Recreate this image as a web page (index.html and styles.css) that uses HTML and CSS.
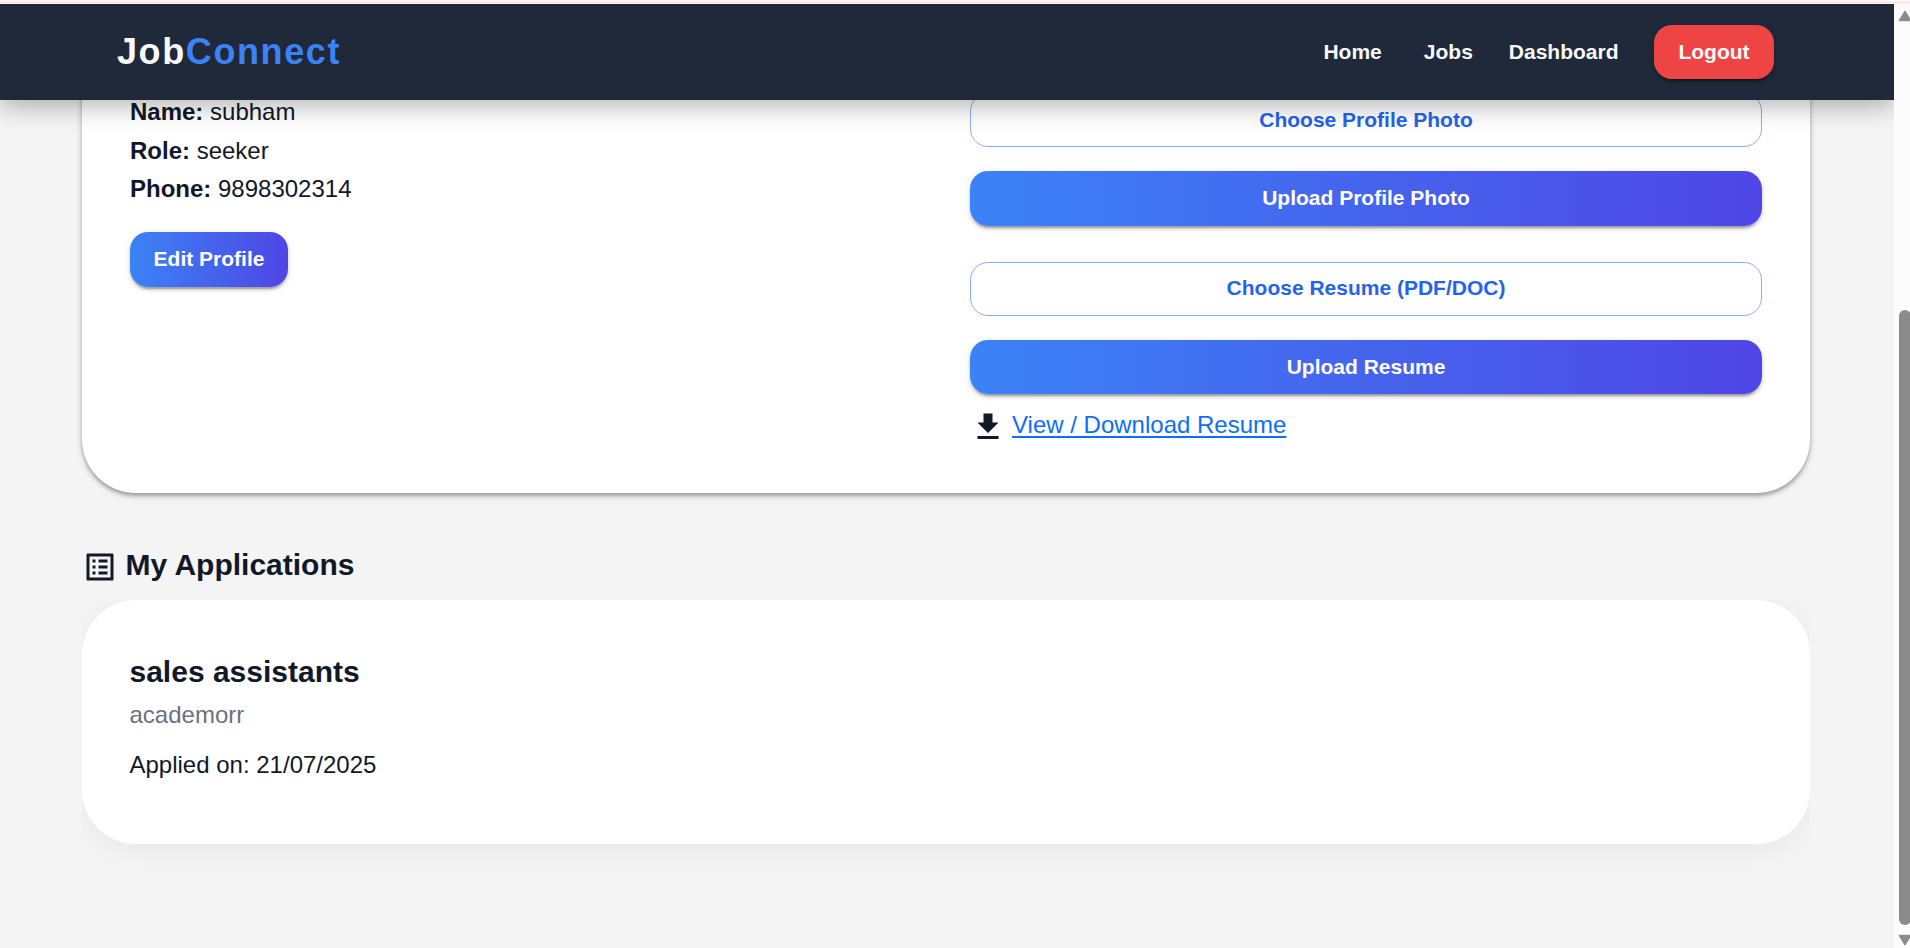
FILE: index.html
```html
<!DOCTYPE html>
<html lang="en">
<head>
<meta charset="utf-8">
<title>JobConnect</title>
<link rel="stylesheet" href="styles.css">
</head>
<body>
<div class="top-edge"></div>
<div class="window">
  <div class="page">
    <header class="navbar">
      <div class="logo">Job<span class="logo-accent">Connect</span></div>
      <nav class="nav-links">
        <a class="nav-link nav-home">Home</a>
        <a class="nav-link">Jobs</a>
        <a class="nav-link">Dashboard</a>
        <button class="btn btn-logout">Logout</button>
      </nav>
    </header>
    <main class="content">
      <section class="card profile">
        <div class="details">
          <p class="detail"><strong>Name:</strong> subham</p>
          <p class="detail"><strong>Role:</strong> seeker</p>
          <p class="detail"><strong>Phone:</strong> 9898302314</p>
          <button class="btn btn-primary btn-edit">Edit Profile</button>
        </div>
        <div class="uploads">
          <div class="upload-group">
            <button class="btn btn-outline">Choose Profile Photo</button>
            <button class="btn btn-primary btn-photo">Upload Profile Photo</button>
          </div>
          <div class="upload-group">
            <button class="btn btn-outline btn-resume">Choose Resume (PDF/DOC)</button>
            <button class="btn btn-primary">Upload Resume</button>
          </div>
          <div class="resume-row">
            <svg class="icon" viewBox="0 0 24 24"><path d="M19 9h-4V3H9v6H5l7 7 7-7zM5 18v2h14v-2H5z"/></svg>
            <a class="resume-link">View / Download Resume</a>
          </div>
        </div>
      </section>
      <h2 class="section-title">
        <svg class="icon" viewBox="0 0 24 24"><path d="M19 5v14H5V5h14m1.1-2H3.9c-.5 0-.9.4-.9.9v16.200c0 .4.4.9.9.9h16.200c.4 0 .9-.5.9-.9V3.900c0-.5-.5-.9-.9-.9zM11 7h6v2h-6V7zm0 4h6v2h-6v-2zm0 4h6v2h-6zM7 7h2v2H7zm0 4h2v2H7zm0 4h2v2H7z"/></svg>
        <span>My Applications</span>
      </h2>
      <div class="applications">
        <article class="card application">
          <h3 class="job-title">sales assistants</h3>
          <p class="company">academorr</p>
          <p class="applied">Applied on: 21/07/2025</p>
        </article>
      </div>
    </main>
  </div>
  <div class="scrollbar">
    <svg class="arrow" viewBox="0 0 14 12"><path d="M7 1.500L12.500 10.500H1.500Z"/></svg>
    <div class="thumb"></div>
    <svg class="arrow" viewBox="0 0 14 12"><path d="M7 10.500L12.500 1.500H1.500Z"/></svg>
  </div>
</div>
</body>
</html>
```
FILE: styles.css
```css
* { box-sizing: border-box; }

body {
  margin: 0;
  width: 1910px;
  height: 948px;
  overflow: hidden;
  background: #f4f4f4;
  color: #111827;
  font: 24px/38.4px "Liberation Sans", Arial, sans-serif;
}

h2, h3, p { margin: 0; }

.top-edge {
  height: 4px;
  background: linear-gradient(#fff6f5 0 2px, #fadcdb 2px 3px, #fff8f8 3px 4px);
}

.window { display: flex; height: 944px; }
.page { width: 1894px; overflow: hidden; }

.navbar {
  position: relative;
  z-index: 2;
  display: flex;
  align-items: center;
  justify-content: space-between;
  height: 96px;
  padding: 0 120px 0 117px;
  background: #1f293a;
  box-shadow: 0 6px 24px rgba(0, 0, 0, .3);
}

.logo {
  color: #f9fafb;
  font-size: 36px;
  font-weight: 700;
  letter-spacing: 1.6px;
}
.logo-accent { color: #3b82f6; }

.nav-links { display: flex; align-items: center; gap: 36px; }
.nav-link { color: #f9fafb; font-size: 21px; font-weight: 700; }
.nav-home { margin-right: 6px; }

.btn {
  display: block;
  width: 100%;
  height: 54px;
  padding: 0;
  border: 0;
  border-radius: 18px;
  color: #fff;
  font: 700 21px/36px "Liberation Sans", Arial, sans-serif;
  text-align: center;
  box-shadow: 0 4.5px 1.5px -3px rgba(0, 0, 0, .2), 0 3px 3px rgba(0, 0, 0, .14), 0 1.5px 7.5px rgba(0, 0, 0, .12);
}
.btn-logout { width: 120px; margin-left: -.5px; background: #ef4444; color: #f9fafb; }
.btn-primary { background: linear-gradient(90deg, #3b82f6, #4f46e5); }
.btn-edit { width: 158px; height: 55px; margin-top: 23.500px; padding-bottom: 1px; }
.btn-photo { height: 55px; padding-bottom: 2px; }
.btn-outline {
  border: 1px solid #8aaef5;
  background: #fff;
  color: #2563eb;
  box-shadow: none;
}
.btn-resume { padding-bottom: 2px; }

.content { padding: 0 84px 0 82px; }

.card { border-radius: 54px; background: #fff; }

.profile {
  display: grid;
  grid-template-columns: 792px 792px;
  column-gap: 48px;
  height: 448px;
  margin-top: -55px;
  padding: 48px;
  box-shadow: 0 3px 6px -1.5px rgba(0, 0, 0, .2), 0 3px 3px rgba(0, 0, 0, .14), 0 1.5px 7.5px rgba(0, 0, 0, .12);
}
.details { padding-top: .3px; }

.uploads { display: flex; flex-direction: column; gap: 36px; }
.upload-group { display: flex; flex-direction: column; gap: 24px; }

.resume-row {
  display: flex;
  align-items: center;
  gap: 6px;
  height: 36px;
  margin-top: -21px;
}
.resume-link {
  margin-top: -4px;
  color: #0d6efd;
  text-decoration: underline;
  text-decoration-thickness: 2px;
  text-underline-offset: 3px;
  text-decoration-skip-ink: none;
}
.icon { flex: none; width: 36px; height: 36px; fill: #111827; }

.section-title {
  display: flex;
  align-items: center;
  gap: 7.500px;
  height: 36px;
  margin-top: 56px;
  font-size: 30px;
  line-height: 32px;
}
.section-title span { margin-top: -4px; }

.applications { height: 300px; margin-top: 15px; overflow: hidden; }

.application {
  height: 244px;
  padding: 48px 47.5px;
  box-shadow: 0 6px 30px rgba(0, 0, 0, .05);
}
.job-title { font-size: 30px; line-height: 48px; }
.company { color: #6b7280; }
.applied { margin-top: 12px; }

.scrollbar {
  display: flex;
  flex-direction: column;
  width: 16px;
  padding: 6px 0 1px 4px;
  overflow: hidden;
  background: #fcfcfc;
}
.arrow {
  flex: none;
  width: 14px;
  height: 12px;
  fill: #8b8b8b;
  stroke: #8b8b8b;
  stroke-width: 1.500;
  stroke-linejoin: round;
}
.thumb {
  width: 12px;
  height: 615px;
  margin: 288px 0 9px 1px;
  border-radius: 6px;
  background: #8b8b8b;
}
```
